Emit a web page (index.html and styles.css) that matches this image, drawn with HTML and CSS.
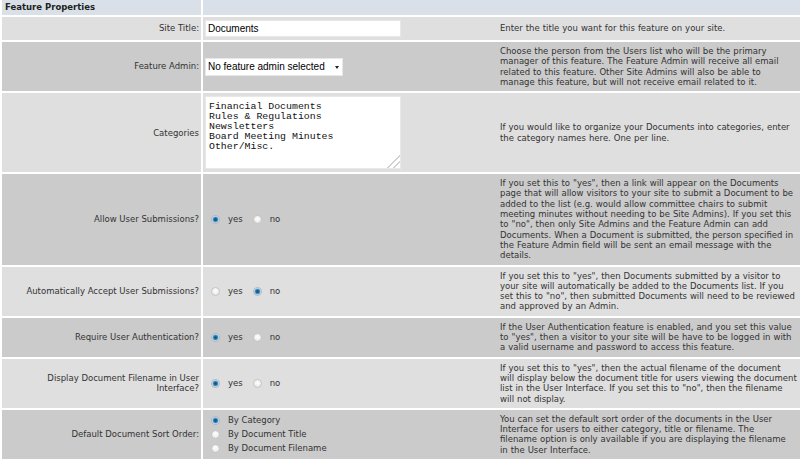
FILE: index.html
```html
<!DOCTYPE html>
<html>
<head>
<meta charset="utf-8">
<title>Feature Properties</title>
<link rel="stylesheet" href="styles.css">
</head>
<body>
<div class="props">
  <div class="row head">
    <div class="label">Feature Properties</div>
    <div class="main"></div>
  </div>

  <div class="row">
    <div class="label">Site Title:</div>
    <div class="main">
      <div class="field"><input class="text" type="text" value="Documents"></div>
      <div class="desc">Enter the title you want for this feature on your site.</div>
    </div>
  </div>

  <div class="row dark">
    <div class="label">Feature Admin:</div>
    <div class="main">
      <div class="field"><span class="select"><select><option>No feature admin selected</option></select></span></div>
      <div class="desc">Choose the person from the Users list who will be the primary<br>manager of this feature. The Feature Admin will receive all email<br>related to this feature. Other Site Admins will also be able to<br>manage this feature, but will not receive email related to it.</div>
    </div>
  </div>

  <div class="row">
    <div class="label">Categories</div>
    <div class="main">
      <div class="field"><textarea class="area">Financial Documents
Rules &amp; Regulations
Newsletters
Board Meeting Minutes
Other/Misc.</textarea></div>
      <div class="desc">If you would like to organize your Documents into categories, enter<br>the category names here. One per line.</div>
    </div>
  </div>

  <div class="row dark">
    <div class="label">Allow User Submissions?</div>
    <div class="main">
      <div class="field">
        <div class="opts">
          <label class="opt"><input class="rb" type="radio" name="allow" checked><span>yes</span></label>
          <label class="opt"><input class="rb" type="radio" name="allow"><span>no</span></label>
        </div>
      </div>
      <div class="desc">If you set this to "yes", then a link will appear on the Documents<br>page that will allow visitors to your site to submit a Document to be<br>added to the list (e.g. would allow committee chairs to submit<br>meeting minutes without needing to be Site Admins). If you set this<br>to "no", then only Site Admins and the Feature Admin can add<br>Documents. When a Document is submitted, the person specified in<br>the Feature Admin field will be sent an email message with the<br>details.</div>
    </div>
  </div>

  <div class="row">
    <div class="label">Automatically Accept User Submissions?</div>
    <div class="main">
      <div class="field">
        <div class="opts">
          <label class="opt"><input class="rb" type="radio" name="accept"><span>yes</span></label>
          <label class="opt"><input class="rb" type="radio" name="accept" checked><span>no</span></label>
        </div>
      </div>
      <div class="desc">If you set this to "yes", then Documents submitted by a visitor to<br>your site will automatically be added to the Documents list. If you<br>set this to "no", then submitted Documents will need to be reviewed<br>and approved by an Admin.</div>
    </div>
  </div>

  <div class="row dark">
    <div class="label">Require User Authentication?</div>
    <div class="main">
      <div class="field">
        <div class="opts">
          <label class="opt"><input class="rb" type="radio" name="auth" checked><span>yes</span></label>
          <label class="opt"><input class="rb" type="radio" name="auth"><span>no</span></label>
        </div>
      </div>
      <div class="desc">If the User Authentication feature is enabled, and you set this value<br>to "yes", then a visitor to your site will be have to be logged in with<br>a valid username and password to access this feature.</div>
    </div>
  </div>

  <div class="row">
    <div class="label">Display Document Filename in User Interface?</div>
    <div class="main">
      <div class="field">
        <div class="opts">
          <label class="opt"><input class="rb" type="radio" name="fname" checked><span>yes</span></label>
          <label class="opt"><input class="rb" type="radio" name="fname"><span>no</span></label>
        </div>
      </div>
      <div class="desc">If you set this to "yes", then the actual filename of the document<br>will display below the document title for users viewing the document<br>list in the User Interface. If you set this to "no", then the filename<br>will not display.</div>
    </div>
  </div>

  <div class="row dark">
    <div class="label">Default Document Sort Order:</div>
    <div class="main">
      <div class="field">
        <div class="opts stack">
          <label class="opt"><input class="rb" type="radio" name="sort" checked><span>By Category</span></label>
          <label class="opt"><input class="rb" type="radio" name="sort"><span>By Document Title</span></label>
          <label class="opt"><input class="rb" type="radio" name="sort"><span>By Document Filename</span></label>
        </div>
      </div>
      <div class="desc">You can set the default sort order of the documents in the User<br>Interface for users to either category, title or filename. The<br>filename option is only available if you are displaying the filename<br>in the User Interface.</div>
    </div>
  </div>
</div>
</body>
</html>
```

FILE: styles.css
```css
html, body {
  margin: 0;
  padding: 0;
  background: #ffffff;
}

body {
  font-family: "DejaVu Sans", Verdana, sans-serif;
  font-size: 8.5px;
  line-height: 10.3px;
  color: #333333;
  overflow: hidden;
}

.props {
  display: flex;
  flex-direction: column;
  gap: 2px;
  padding-left: 2px;
}

.row {
  display: grid;
  grid-template-columns: 199px 1fr;
  column-gap: 2px;
}

.row > * {
  background: #dfdfdf;
}

.row.dark > * {
  background: #cbcbcb;
}

.row.head > * {
  background: #d9e0e7;
  height: 15px;
}

.label {
  display: flex;
  align-items: center;
  justify-content: flex-end;
  text-align: right;
  padding: 0 2px 0 4px;
}

.head .label {
  justify-content: flex-start;
  font-weight: bold;
  color: #222222;
  padding-left: 3px;
}

.main {
  display: grid;
  grid-template-columns: 297px 1fr;
  align-items: center;
  min-width: 0;
}

.field {
  padding: 3px 0 3px 2px;
}

.desc {
  padding: 4px 0;
  white-space: nowrap;
  word-spacing: 0.27px;
}

.text {
  display: block;
  box-sizing: border-box;
  width: 196px;
  height: 17px;
  margin: 0;
  padding: 0 2px;
  border: 1px solid #e8e8e8;
  background: #ffffff;
  font-family: "Liberation Sans", Arial, sans-serif;
  font-size: 10px;
  color: #000000;
  outline: none;
}

.select {
  position: relative;
  display: inline-block;
  vertical-align: middle;
}

.select select {
  -webkit-appearance: none;
  appearance: none;
  display: block;
  box-sizing: border-box;
  width: 138px;
  height: 18px;
  margin: 0;
  padding: 0 0 0 2px;
  border: 1px solid #e8e8e8;
  border-radius: 0;
  background: #ffffff;
  font-family: "Liberation Sans", Arial, sans-serif;
  font-size: 10px;
  color: #000000;
}

.select::after {
  content: "";
  position: absolute;
  right: 4px;
  top: 8px;
  border-left: 2.5px solid transparent;
  border-right: 2.5px solid transparent;
  border-top: 3px solid #222222;
  pointer-events: none;
}

.area {
  display: block;
  box-sizing: border-box;
  width: 196px;
  height: 73px;
  margin: 0;
  padding: 5px 3px 3px;
  border: 1px solid #e8e8e8;
  background: #ffffff;
  font-family: "Liberation Mono", "Courier New", monospace;
  font-size: 9.9px;
  line-height: 10px;
  color: #111111;
  outline: none;
  overflow: hidden;
}

.area::-webkit-resizer {
  background: linear-gradient(135deg, transparent 55%, #d0d0d0 55%, #d0d0d0 62%, transparent 62%, transparent 75%, #d0d0d0 75%, #d0d0d0 82%, transparent 82%);
}

.opts {
  display: flex;
  align-items: center;
}

.opts.stack {
  flex-direction: column;
  align-items: flex-start;
}

.opt {
  display: flex;
  align-items: center;
  height: 14px;
  margin-right: 4px;
}

.rb {
  -webkit-appearance: none;
  appearance: none;
  flex: none;
  box-sizing: border-box;
  width: 9px;
  height: 9px;
  margin: 0 8px 0 6px;
  border-radius: 50%;
  border: 1px solid #c6c6c6;
  background: radial-gradient(circle at 50% 40%, #ffffff 0, #f1f1f1 50%, #dcdcdc 100%);
}

.rb:checked {
  border-color: #a3b7c8;
  background: radial-gradient(circle at 50% 50%, #0c4f7e 0, #1f6fa6 1.6px, #6aa3cc 2.6px, #eef3f7 3.4px, #e2e2e2 100%);
}
```
